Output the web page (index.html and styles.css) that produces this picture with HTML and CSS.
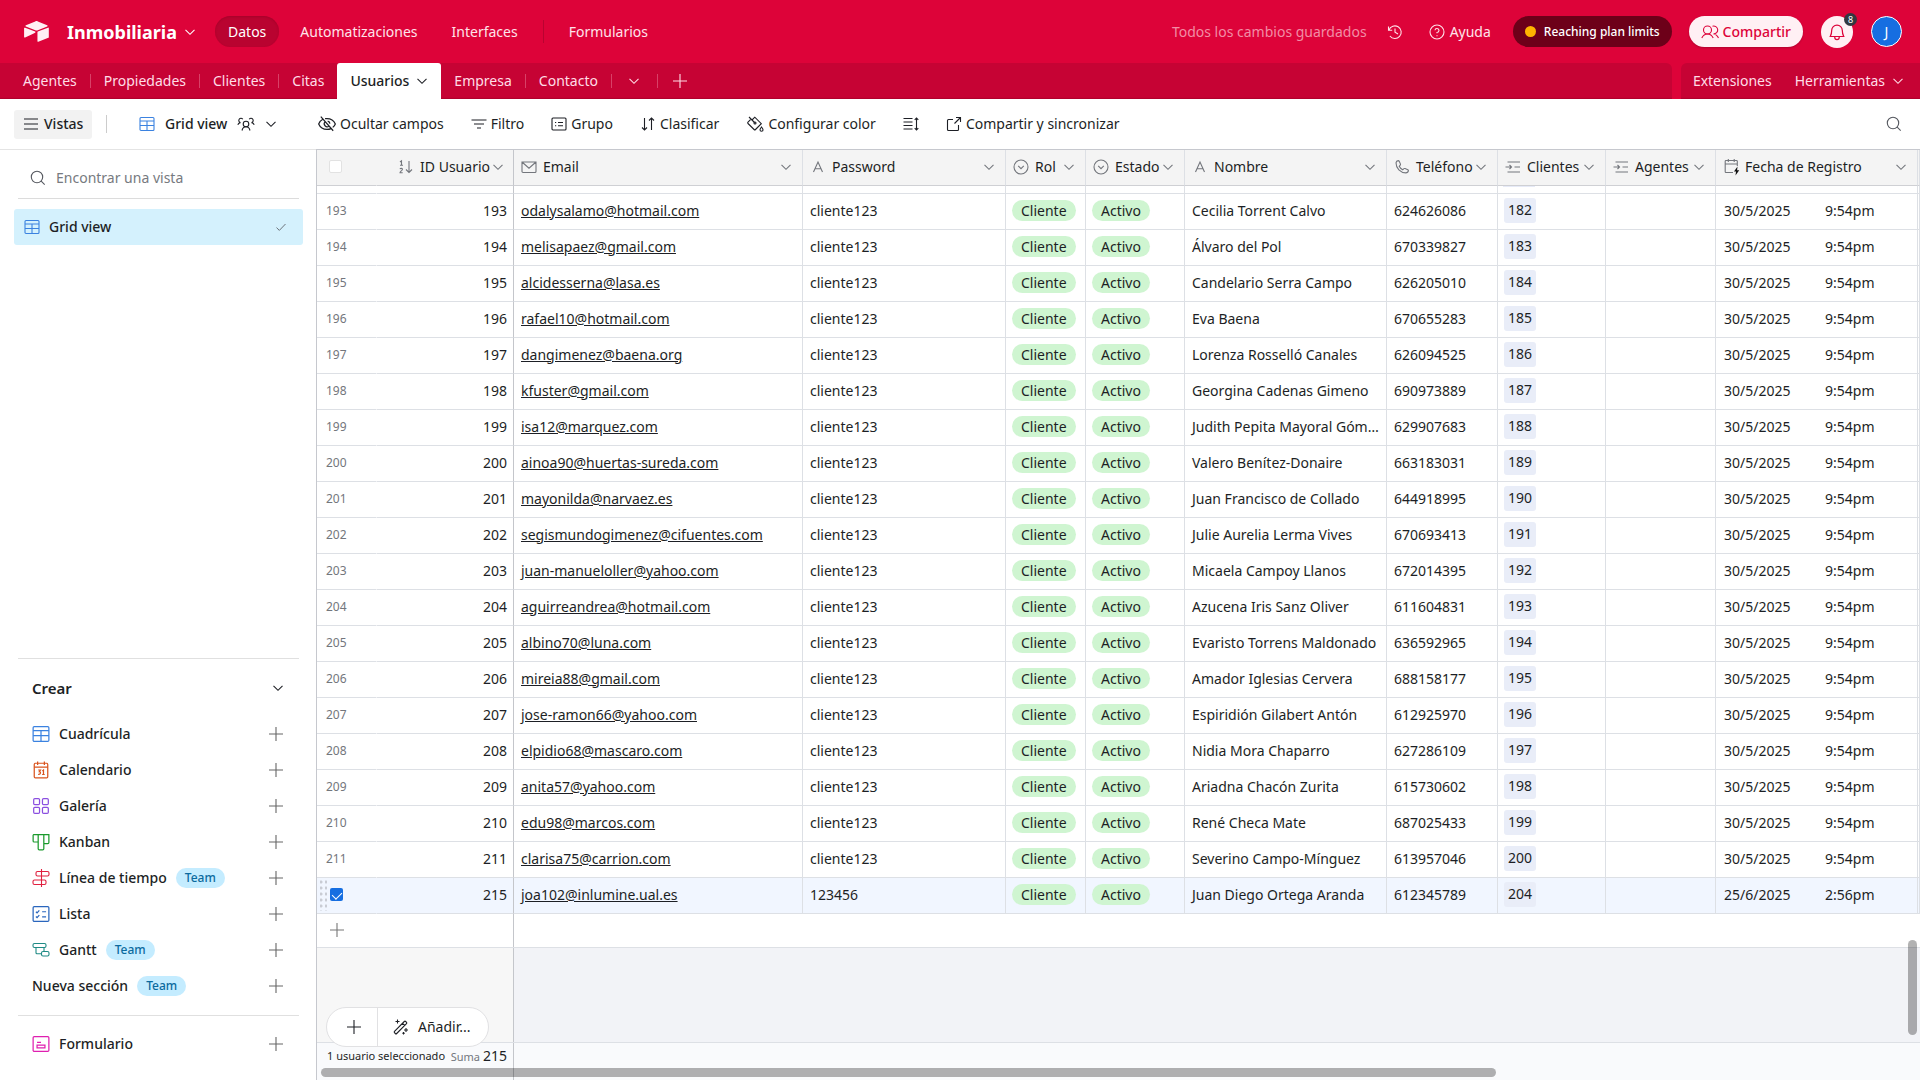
FILE: index.html
```html
<!DOCTYPE html>
<html lang="es">
<head>
<meta charset="utf-8">
<title>Inmobiliaria: Usuarios</title>
<link rel="stylesheet" href="styles.css">
</head>
<body>
<svg class="defs" aria-hidden="true">
  <symbol id="chev" viewBox="0 0 12 12"><path d="M1.5 3.8 6 8.3l4.500-4.500"/></symbol>
  <symbol id="plus" viewBox="0 0 16 16"><path d="M8 1v14M1 8h14"/></symbol>
  <symbol id="grid" viewBox="0 0 16 16"><rect x="1" y="1.500" width="14" height="13" rx="1"/><path d="M1 5h14M1 9.500h14M8 5v9.500"/></symbol>
  <symbol id="search" viewBox="0 0 16 16"><circle cx="7" cy="7" r="5.700"/><path d="m11.200 11.200 3.500 3.500"/></symbol>
  <symbol id="menu" viewBox="0 0 16 16"><path d="M1 3h14M1 8h14M1 13h14"/></symbol>
  <symbol id="team" viewBox="0 0 18 16"><circle cx="9" cy="8" r="2.800"/><path d="M5 14.500c.6-2.400 2-3.700 4-3.700s3.400 1.300 4 3.700M5.800 3.200A2.200 2.200 0 1 0 3.500 6.600C2.200 6.700 1.300 7.500.8 8.800M12.200 3.200a2.200 2.200 0 1 1 2.300 3.400c1.300.1 2.200.9 2.700 2.200"/></symbol>
  <symbol id="hide" viewBox="0 0 16 16"><path d="M2.500 1.500 13.500 14M4.300 3.800C2.500 4.700 1.300 6.200.6 8c1.300 3 4 4.800 7.400 4.800 1.300 0 2.500-.2 3.500-.7M6.300 3.300c.6-.1 1.100-.1 1.700-.1 3.400 0 6.100 1.800 7.400 4.800-.5 1.200-1.300 2.200-2.300 3M6.200 6.100a2.600 2.600 0 0 0 3.500 3.800M8.600 5.400a2.600 2.600 0 0 1 2 2.300"/></symbol>
  <symbol id="filter" viewBox="0 0 16 16"><path d="M.5 4h15M3 8h10M6 12h4"/></symbol>
  <symbol id="group" viewBox="0 0 16 16"><rect x="1" y="2" width="14" height="12" rx="1"/><path d="M7 6.500h5M7 9.800h5M4 6.500h1.200M4 9.800h1.200"/></symbol>
  <symbol id="sort" viewBox="0 0 16 16"><path d="M4.500 2v12M2 11.500l2.500 2.500L7 11.500M11.500 14V2M9 4.500 11.500 2 14 4.500"/></symbol>
  <symbol id="paint" viewBox="0 0 18 17"><path d="M3 1.500 8.500 7M6 4.500l2.800-2.800 6.500 6.500-5.800 5.800a1 1 0 0 1-1.400 0L2 8a1 1 0 0 1 0-1.400l2.500-2.500M15.500 11.500c1 1.300 1.500 2 1.500 2.700a1.500 1.500 0 0 1-3 0c0-.7.500-1.400 1.500-2.700Z"/><circle cx="9" cy="7.500" r="1"/></symbol>
  <symbol id="height" viewBox="0 0 16 16"><path d="M.5 2.500h9M.5 6h9M.5 9.500h9M.5 13h9M13.500 2v12M11.700 3.800l1.800-1.800 1.800 1.800M11.700 12.200l1.800 1.800 1.800-1.800"/></symbol>
  <symbol id="export" viewBox="0 0 16 16"><path d="M7 3.500H2.500a1 1 0 0 0-1 1v9a1 1 0 0 0 1 1h9a1 1 0 0 0 1-1V9M10 1.500h4.500V6M14.500 1.500 8.500 7.500"/></symbol>
  <symbol id="check" viewBox="0 0 16 16"><path d="m2 8.800 3.800 3.700L14 4"/></symbol>
  <symbol id="cal" viewBox="0 0 16 16"><rect x="2" y="2" width="12" height="13" rx="1"/><path d="M2 5.500h12M5 .5v3M11 .5v3M5.500 8h2L6.500 9.500c1.500 0 1.500 2.700-1 2.300M9.200 8.800l1-.8v4M9 12h2.300"/></symbol>
  <symbol id="gallery" viewBox="0 0 16 16"><rect x="1.500" y="1.500" width="5.200" height="5.200" rx="1"/><rect x="9.300" y="1.500" width="5.200" height="5.200" rx="1"/><rect x="1.500" y="9.300" width="5.200" height="5.200" rx="1"/><rect x="9.300" y="9.300" width="5.200" height="5.200" rx="1"/></symbol>
  <symbol id="kanban" viewBox="0 0 16 16"><path d="M1 1.500h14v7a1 1 0 0 1-1 1h-3.500V14a1 1 0 0 1-1 1h-3a1 1 0 0 1-1-1V1.500M1 1.500V7a1 1 0 0 0 1 1h3.500M10.500 1.500v8"/></symbol>
  <symbol id="timeline" viewBox="0 0 18 18"><path d="M9.500 0v18"/><rect x="4" y="2.500" width="13" height="4.500" rx="1.500"/><rect x="1" y="11" width="13" height="4.500" rx="1.500"/></symbol>
  <symbol id="list" viewBox="0 0 16 16"><rect x="1" y="1.500" width="14" height="13" rx="1"/><path d="m3.500 6 1 1 2-2.200M3.500 10.200l1 1 2-2.200M9 6h3.500M9 10.500h3.500"/></symbol>
  <symbol id="gantt" viewBox="0 0 18 16"><rect x="1" y="1.500" width="13" height="4" rx="1.500"/><rect x="9.500" y="9.500" width="7.500" height="4.500" rx="1.500"/><path d="M4 5.500v5.200a1 1 0 0 0 1 1h4.500M12 5.500v4"/></symbol>
  <symbol id="form" viewBox="0 0 16 16"><rect x="1" y="1.500" width="14" height="13" rx="1"/><path d="M4.500 9h7v2.500h-7zM4.500 6.500h3.500"/></symbol>
  <symbol id="num" viewBox="0 0 16 16"><path d="M2 3l1.500-1.200v4.500M2 6.300h3M2 10.200c.4-1.200 2.600-1 2.400.3C4.300 11.500 2 12.500 2 13.700h2.700M11 2v11.500M8 10.500l3 3 3-3"/></symbol>
  <symbol id="mail" viewBox="0 0 16 16"><path d="M1 3h14v9.500a1 1 0 0 1-1 1H2a1 1 0 0 1-1-1ZM1 3l7 6.200L15 3"/></symbol>
  <symbol id="text" viewBox="0 0 16 16"><path d="M3.500 13 8 3l4.500 10M5 9.700h6"/></symbol>
  <symbol id="select" viewBox="0 0 16 16"><circle cx="8" cy="8" r="7"/><path d="M5.200 6.800 8 9.600l2.800-2.800"/></symbol>
  <symbol id="phone" viewBox="0 0 16 16"><path d="M2 3.800C2.200 2.500 3.200 1.700 4.300 1.600c.5 0 .7.200.9.600l1.200 2.700c.2.500.1.900-.2 1.200L5.200 7.300c.7 1.500 1.900 2.700 3.500 3.500l1.200-1.100c.3-.3.800-.3 1.200-.2l2.700 1.200c.4.200.6.500.6.900-.2 1.300-1.200 2.300-2.600 2.300C6.400 13.900 2 9.400 2 3.800Z"/></symbol>
  <symbol id="link" viewBox="0 0 16 16"><path d="M2.500 3H15M9.500 8H15M2.500 13H15M.5 8h6M4.500 6l2 2-2 2"/></symbol>
  <symbol id="caltime" viewBox="0 0 16 18"><path d="M9 14.500H2a.8.8 0 0 1-.8-.8V3.300c0-.4.400-.8.800-.8h10.500c.4 0 .8.400.8.800V8M1.200 6h12M4.300 1v3M10.200 1v3"/><path d="M13.500 8.500 10 13.500h2l-.5 4 3.700-5.200h-2.100z" fill="#111" stroke="none"/></symbol>
  <symbol id="history" viewBox="0 0 16 16"><path d="M1.500 2.500v3.700h3.700M2 6a6.300 6.300 0 1 1 .9 6M8 4.500V8.200l3 1.700"/></symbol>
  <symbol id="help" viewBox="0 0 16 16"><circle cx="8" cy="8" r="7"/><path d="M6 6.300A2 2 0 1 1 8 8.500v.8M8 11.200v1"/></symbol>
  <symbol id="people" viewBox="0 0 18 16"><circle cx="6.500" cy="6" r="4"/><path d="M.8 14C2 11.500 4 10 6.500 10s4.500 1.500 5.700 4M11.500 2.200A4 4 0 1 1 12.500 10c2 .1 3.800 1.500 5 4"/></symbol>
  <symbol id="bell" viewBox="0 0 16 16"><path d="M3.300 6.500a4.700 4.700 0 0 1 9.400 0c0 2.400.6 4.200 1.300 5.500H2c.7-1.300 1.300-3.100 1.300-5.500ZM6 12.200v.5a2 2 0 0 0 4 0v-.5"/></symbol>
  <symbol id="wand" viewBox="0 0 16 16"><path d="M1.500 12.300 11.300 2.500a1 1 0 0 1 1.400 0l.8.800a1 1 0 0 1 0 1.400L3.700 14.500a1 1 0 0 1-1.400 0l-.8-.8a1 1 0 0 1 0-1.400ZM9.500 4.300l2.200 2.200M4.500.5v4M2.500 2.500h4M13 9v4M11 11h4M10.500 13v2.500M9.300 14.300h2.500"/></symbol>
  <symbol id="logo" viewBox="0 0 26 22"><path d="M11.700.4 1.900 4.500c-.6.200-.6 1 0 1.200l9.900 3.900c.8.300 1.800.3 2.600 0l9.800-3.900c.6-.2.600-1 0-1.200L14.400.4c-.9-.4-1.800-.4-2.700 0ZM14 11.800v9.300c0 .5.400.8.900.6l10.500-4.100c.3-.1.500-.4.500-.7V7.600c0-.5-.5-.8-.9-.6l-10.600 4.100c-.3.100-.4.400-.4.700ZM11.600 12.200 8.400 13.800 1.100 17.300c-.5.200-1.100-.1-1.100-.6V7.700c0-.2.100-.4.200-.5.200-.2.600-.3.900-.1L11.600 11c.5.200.5.900 0 1.200Z"/></symbol>
</svg>

<div class="app">
<header class="topbar">
  <a class="brand" href="#"><svg class="logo"><use href="#logo"/></svg><span>Inmobiliaria</span><svg class="i12"><use href="#chev"/></svg></a>
  <nav class="mainnav">
    <a class="current" href="#">Datos</a><a href="#">Automatizaciones</a><a href="#">Interfaces</a><i class="navsep"></i><a href="#">Formularios</a>
  </nav>
  <div class="topright">
    <span class="saved">Todos los cambios guardados</span>
    <button class="plain" aria-label="Historial"><svg class="i16"><use href="#history"/></svg></button>
    <button class="plain help"><svg class="i16"><use href="#help"/></svg>Ayuda</button>
    <button class="limits"><i></i>Reaching plan limits</button>
    <button class="share"><svg class="i18"><use href="#people"/></svg>Compartir</button>
    <button class="bell" aria-label="Notificaciones"><svg class="i18"><use href="#bell"/></svg><span>8</span></button>
    <button class="avatar">J</button>
  </div>
</header>

<div class="tabs">
  <nav class="tablist">
    <a href="#">Agentes</a><a class="sep" href="#">Propiedades</a><a class="sep" href="#">Clientes</a><a class="sep" href="#">Citas</a><a class="active" href="#">Usuarios<svg class="i12"><use href="#chev"/></svg></a><a href="#">Empresa</a><a class="sep" href="#">Contacto</a>
    <button class="sep more" aria-label="Más tablas"><svg class="i12"><use href="#chev"/></svg></button>
    <button class="sep add" aria-label="Añadir tabla"><svg class="i16"><use href="#plus"/></svg></button>
  </nav>
  <nav class="tabtools"><a href="#">Extensiones</a><a href="#">Herramientas<svg class="i12"><use href="#chev"/></svg></a></nav>
</div>

<div class="toolbar">
  <button class="views"><svg class="i16"><use href="#menu"/></svg>Vistas</button>
  <i class="toolsep"></i>
  <button class="viewname"><svg class="i16 blue"><use href="#grid"/></svg>Grid view<svg class="i18"><use href="#team"/></svg><svg class="i12"><use href="#chev"/></svg></button>
  <div class="actions">
    <button><svg class="i18"><use href="#hide"/></svg>Ocultar campos</button>
    <button><svg class="i16"><use href="#filter"/></svg>Filtro</button>
    <button><svg class="i16"><use href="#group"/></svg>Grupo</button>
    <button><svg class="i16"><use href="#sort"/></svg>Clasificar</button>
    <button><svg class="i18"><use href="#paint"/></svg>Configurar color</button>
    <button aria-label="Altura de fila"><svg class="i16"><use href="#height"/></svg></button>
    <button><svg class="i16"><use href="#export"/></svg>Compartir y sincronizar</button>
  </div>
  <button class="find" aria-label="Buscar"><svg class="i16"><use href="#search"/></svg></button>
</div>

<div class="body">
<aside class="sidebar">
  <label class="viewsearch"><svg class="i16"><use href="#search"/></svg><input type="text" aria-label="Encontrar una vista" placeholder="Encontrar una vista"></label>
  <a class="viewitem" href="#"><svg class="i16 blue"><use href="#grid"/></svg>Grid view<svg class="i12 tick"><use href="#check"/></svg></a>
  <section class="create">
    <h2>Crear<svg class="i12"><use href="#chev"/></svg></h2>
    <button><svg class="i18 blue"><use href="#grid"/></svg>Cuadrícula<svg class="i16 p"><use href="#plus"/></svg></button>
    <button><svg class="i18 orange"><use href="#cal"/></svg>Calendario<svg class="i16 p"><use href="#plus"/></svg></button>
    <button><svg class="i18 purple"><use href="#gallery"/></svg>Galería<svg class="i16 p"><use href="#plus"/></svg></button>
    <button><svg class="i18 green"><use href="#kanban"/></svg>Kanban<svg class="i16 p"><use href="#plus"/></svg></button>
    <button><svg class="i18 red"><use href="#timeline"/></svg>Línea de tiempo<span class="team">Team</span><svg class="i16 p"><use href="#plus"/></svg></button>
    <button><svg class="i18 navy"><use href="#list"/></svg>Lista<svg class="i16 p"><use href="#plus"/></svg></button>
    <button><svg class="i18 teal"><use href="#gantt"/></svg>Gantt<span class="team">Team</span><svg class="i16 p"><use href="#plus"/></svg></button>
    <button>Nueva sección<span class="team">Team</span><svg class="i16 p"><use href="#plus"/></svg></button>
    <hr>
    <button><svg class="i18 pink"><use href="#form"/></svg>Formulario<svg class="i16 p"><use href="#plus"/></svg></button>
  </section>
</aside>

<main class="gridarea">
  <table>
    <colgroup><col class="c-idx"><col class="c-id"><col class="c-email"><col class="c-pass"><col class="c-rol"><col class="c-estado"><col class="c-nombre"><col class="c-tel"><col class="c-cli"><col class="c-age"><col class="c-fecha"><col></colgroup>
    <thead><tr>
      <th class="idx"><input type="checkbox" aria-label="Seleccionar todo"></th>
      <th class="id"><div><svg class="i16"><use href="#num"/></svg><span>ID Usuario</span><svg class="i12"><use href="#chev"/></svg></div></th>
      <th><div><svg class="i16"><use href="#mail"/></svg><span>Email</span><svg class="i12"><use href="#chev"/></svg></div></th>
      <th><div><svg class="i16"><use href="#text"/></svg><span>Password</span><svg class="i12"><use href="#chev"/></svg></div></th>
      <th><div><svg class="i16"><use href="#select"/></svg><span>Rol</span><svg class="i12"><use href="#chev"/></svg></div></th>
      <th><div><svg class="i16"><use href="#select"/></svg><span>Estado</span><svg class="i12"><use href="#chev"/></svg></div></th>
      <th><div><svg class="i16"><use href="#text"/></svg><span>Nombre</span><svg class="i12"><use href="#chev"/></svg></div></th>
      <th><div><svg class="i16"><use href="#phone"/></svg><span>Teléfono</span><svg class="i12"><use href="#chev"/></svg></div></th>
      <th><div><svg class="i16"><use href="#link"/></svg><span>Clientes</span><svg class="i12"><use href="#chev"/></svg></div></th>
      <th><div><svg class="i16"><use href="#link"/></svg><span>Agentes</span><svg class="i12"><use href="#chev"/></svg></div></th>
      <th><div class="snug"><svg class="i18"><use href="#caltime"/></svg><span>Fecha de Registro</span><svg class="i12"><use href="#chev"/></svg></div></th>
      <th></th>
    </tr></thead>
    <tbody id="rows"></tbody>
  </table>
  <div class="addrow"><button aria-label="Añadir registro"><svg class="i16"><use href="#plus"/></svg></button><div></div></div>
  <div class="blank"><div></div><div></div></div>
  <div class="summary"><div class="sumleft"><span class="count">1 usuario seleccionado</span><span class="sum"><small>Suma</small>215</span></div><div></div></div>
  <div class="floater"><button aria-label="Añadir"><svg class="i16"><use href="#plus"/></svg></button><button><svg class="i16"><use href="#wand"/></svg>Añadir...</button></div>
  <div class="hscroll"></div>
  <div class="vscroll"></div>
</main>
</div>
</div>
<script src="rows.js"></script>
</body>
</html>
```

FILE: rows.js
```js
const records = [
  [193, 'odalysalamo@hotmail.com', 'Cecilia Torrent Calvo', '624626086', 182],
  [194, 'melisapaez@gmail.com', 'Álvaro del Pol', '670339827', 183],
  [195, 'alcidesserna@lasa.es', 'Candelario Serra Campo', '626205010', 184],
  [196, 'rafael10@hotmail.com', 'Eva Baena', '670655283', 185],
  [197, 'dangimenez@baena.org', 'Lorenza Rosselló Canales', '626094525', 186],
  [198, 'kfuster@gmail.com', 'Georgina Cadenas Gimeno', '690973889', 187],
  [199, 'isa12@marquez.com', 'Judith Pepita Mayoral Gómez', '629907683', 188],
  [200, 'ainoa90@huertas-sureda.com', 'Valero Benítez-Donaire', '663183031', 189],
  [201, 'mayonilda@narvaez.es', 'Juan Francisco de Collado', '644918995', 190],
  [202, 'segismundogimenez@cifuentes.com', 'Julie Aurelia Lerma Vives', '670693413', 191],
  [203, 'juan-manueloller@yahoo.com', 'Micaela Campoy Llanos', '672014395', 192],
  [204, 'aguirreandrea@hotmail.com', 'Azucena Iris Sanz Oliver', '611604831', 193],
  [205, 'albino70@luna.com', 'Evaristo Torrens Maldonado', '636592965', 194],
  [206, 'mireia88@gmail.com', 'Amador Iglesias Cervera', '688158177', 195],
  [207, 'jose-ramon66@yahoo.com', 'Espiridión Gilabert Antón', '612925970', 196],
  [208, 'elpidio68@mascaro.com', 'Nidia Mora Chaparro', '627286109', 197],
  [209, 'anita57@yahoo.com', 'Ariadna Chacón Zurita', '615730602', 198],
  [210, 'edu98@marcos.com', 'René Checa Mate', '687025433', 199],
  [211, 'clarisa75@carrion.com', 'Severino Campo-Mínguez', '613957046', 200],
  [215, 'joa102@inlumine.ual.es', 'Juan Diego Ortega Aranda', '612345789', 204, true]
];

const peek = '<tr class="peek">' + '<td></td>'.repeat(8) + '<td><i></i></td><td></td><td></td><td></td></tr>';

const rowHtml = ([id, email, name, phone, client, selected]) => `
<tr${selected ? ' class="selected"' : ''}>
<td class="idx">${selected ? '<div class="grip"></div><input type="checkbox" checked aria-label="Seleccionar 215">' : id}</td>
<td class="id">${id}</td>
<td><a href="mailto:${email}">${email}</a></td>
<td>${selected ? '123456' : 'cliente123'}</td>
<td class="tight"><span class="pill">Cliente</span></td>
<td class="tight"><span class="pill">Activo</span></td>
<td class="name">${name}</td>
<td>${phone}</td>
<td class="tight"><span class="chip">${client}</span></td>
<td></td>
<td class="when"><span>${selected ? '25/6/2025' : '30/5/2025'}</span><span>${selected ? '2:56pm' : '9:54pm'}</span></td>
<td></td>
</tr>`;

document.getElementById('rows').innerHTML = peek + records.map(rowHtml).join('');
```

FILE: styles.css
```css
* { box-sizing: border-box; }
body { margin: 0; font: 14px/20px "Noto Sans", "Open Sans", sans-serif; color: #1d1f25; background: #fff; }
button, input { font: inherit; color: inherit; }
button { border: 0; padding: 0; background: none; display: flex; align-items: center; white-space: nowrap; }
a { color: inherit; text-decoration: none; }
.defs { position: absolute; width: 0; height: 0; }
svg { fill: none; stroke: currentColor; stroke-width: 1.1; flex: none; }
.i12 { width: 12px; height: 12px; }
.i16 { width: 16px; height: 16px; }
.i18 { width: 18px; height: 18px; }
.app { display: flex; flex-direction: column; height: 100vh; overflow: hidden; }

.topbar { display: flex; align-items: center; height: 63px; flex: none; padding: 0 18px 0 24px; background: #dd0339; color: #ffe3ea; }
.brand { display: flex; align-items: center; font-size: 18px; font-weight: 700; color: #fff; }
.logo { width: 25px; height: 21px; fill: #fff0f4; stroke: none; margin-right: 18px; }
.brand .i12 { margin: 0 19px 0 7px; }
.mainnav { display: flex; align-items: center; gap: 8px; }
.mainnav a { padding: 0 13px; line-height: 31px; border-radius: 16px; }
.mainnav .current { background: #b90330; color: #fff; box-shadow: inset 0 1px 2px #8c002466; }
.navsep { width: 1px; height: 23px; background: #b90330; margin: 0 4px; }
.topright { display: flex; align-items: center; margin-left: auto; }
.saved { color: #f28da5; margin-right: 20px; }
.plain { margin-right: 26px; }
.plain.help { gap: 5px; margin-right: 22px; }
.limits { height: 31px; padding: 0 12px; border-radius: 16px; background: #6d0019; color: #fff; font-size: 12px; font-weight: 500; gap: 8px; margin-right: 17px; }
.limits i { width: 11px; height: 11px; border-radius: 50%; background: #ffb400; }
.share { height: 31px; padding: 0 12px; border-radius: 16px; background: #fff0f4; color: #dd0339; font-weight: 500; gap: 4px; margin-right: 18px; box-shadow: 0 1px 2px #0003; }
.bell { position: relative; width: 32px; height: 32px; border-radius: 50%; background: #fff0f4; color: #dd0339; justify-content: center; margin-right: 18px; }
.bell span { position: absolute; right: -4px; top: -3px; width: 13px; height: 13px; border-radius: 50%; background: #333840; color: #fff; font-size: 9px; line-height: 13px; text-align: center; }
.avatar { width: 31px; height: 31px; border-radius: 50%; border: 1px solid #fff; background: #166ee1; color: #fff; justify-content: center; }

.tabs { display: flex; gap: 9px; height: 36px; flex: none; background: #dd0339; color: #ffdde6; }
.tablist, .tabtools { display: flex; align-items: stretch; background: #c60334; box-shadow: inset 0 -2px 1px -1px #8c002466; }
.tablist { flex: 1; border-top-right-radius: 6px; padding-left: 10px; }
.tablist a, .tabtools a { display: flex; align-items: center; padding: 0 13px; }
.tablist .sep { border-left: 1px solid; border-image: linear-gradient(transparent 11px, #d84167 11px 25px, transparent 25px) 1; }
.tablist .active { background: #fff; color: #1d1f25; font-weight: 500; border-radius: 3px 3px 0 0; gap: 7px; }
.tablist button { width: 46px; justify-content: center; }
.tabtools { border-top-left-radius: 6px; padding-right: 5px; }
.tabtools a { padding: 0 11px 0 12px; gap: 7px; }

.toolbar { display: flex; align-items: center; height: 50px; flex: none; padding: 0 18px 0 14px; }
.views { height: 29px; width: 78px; gap: 5px; padding-left: 9px; border-radius: 3px; background: #f2f2f2; font-weight: 500; }
.toolsep { width: 1px; height: 18px; background: #ccc; margin: 0 32px 0 14px; }
.viewname { width: 179px; gap: 10px; font-weight: 500; }
.actions { display: flex; gap: 27px; }
.actions button { gap: 4px; }
.find { margin-left: auto; color: #55585f; }

.body { display: flex; flex: 1; min-height: 0; }
.sidebar { width: 316px; flex: none; display: flex; flex-direction: column; padding: 0 13px 18px 14px; border-top: 1px solid #e4e4e4; }
.viewsearch { display: flex; align-items: center; gap: 10px; height: 49px; margin: 0 4px; padding: 8px 12px 0; border-bottom: 1px solid #dcdcdc; color: #55585f; }
.viewsearch input { border: 0; outline: 0; padding: 0; flex: 1; min-width: 0; background: none; }
.viewsearch input::placeholder { color: #777a80; opacity: 1; }
.viewitem { display: flex; align-items: center; height: 36px; margin-top: 10px; padding: 0 16px 0 10px; gap: 9px; border-radius: 3px; background: #d4f1fd; font-weight: 500; }
.tick { margin-left: auto; color: #55585f; }
.create { margin: auto 4px 0; border-top: 1px solid #e0e0e0; }
.create hr { border: 0; border-top: 1px solid #e0e0e0; margin: 11px 0 10px; }
.create h2 { display: flex; align-items: center; justify-content: space-between; margin: 0; padding: 0 15px 0 14px; height: 57px; font-size: 15px; font-weight: 600; }
.create button { width: 100%; height: 36px; padding: 0 15px 0 14px; gap: 9px; font-weight: 500; }
.p { margin-left: auto; color: #666; }
.team { height: 20px; padding: 0 9px; border-radius: 10px; background: #c4ecff; color: #0b6a9e; font-size: 12px; }
.blue { color: #3b82e0; } .orange { color: #d9541e; } .purple { color: #8b4fe0; } .green { color: #1a9a2c; }
.red { color: #e0203f; } .navy { color: #2a66bd; } .teal { color: #1f8a85; } .pink { color: #df1fb0; }

.gridarea { position: relative; flex: 1; min-width: 0; display: flex; flex-direction: column; overflow: hidden; border-left: 1px solid #c6c8ce; border-top: 1px solid #c6c8ce; }
table { table-layout: fixed; width: 100%; border-collapse: separate; border-spacing: 0; flex: none; }
.c-idx { width: 60px; } .c-id { width: 137px; } .c-email { width: 289px; } .c-pass { width: 203px; } .c-rol { width: 80px; }
.c-estado { width: 99px; } .c-nombre { width: 202px; } .c-tel { width: 111px; } .c-cli { width: 108px; } .c-age { width: 110px; } .c-fecha { width: 202px; }
th, td { height: 36px; padding: 0 10px 2px 7px; border-right: 1px solid #dde0e5; border-bottom: 1px solid #dde0e5; text-align: left; white-space: nowrap; overflow: hidden; text-overflow: ellipsis; }
th { font-weight: 400; background: #f4f4f4; border-bottom-color: #cfd0d4; }
th div { display: flex; align-items: center; gap: 6px; }
th .snug { gap: 4px; }
th svg { color: #73767c; }
th .i12 { margin-left: auto; }
th span { margin-right: -4px; }
td.name { padding-right: 4px; }
.idx { border-right-color: transparent; padding-left: 9px; color: #73767c; font-size: 12px; position: relative; }
th.idx { padding-left: 12px; border-right-color: #f4f4f4; }
.id { border-right-color: #c4c6cb; text-align: right; padding-right: 6px; }
th.id { padding-right: 9px; }
.id div { justify-content: flex-end; }
th.id .i12 { margin-left: 0; }
td a { text-decoration: underline; }
.peek td { height: 8px; line-height: 0; padding: 0 0 0 5px; vertical-align: top; }
.peek td:first-child { border-right-color: transparent; }
.peek td:nth-child(2) { border-right-color: #c4c6cb; }
.peek i { display: block; width: 32px; height: 1px; background: #e6eaf7; }
td.tight { padding-left: 6px; padding-right: 0; }
.pill { display: inline-block; vertical-align: middle; padding: 0 9px; line-height: 21px; border-radius: 11px; background: #cff5d1; }
.chip { display: inline-block; vertical-align: middle; padding: 0 4px 2px; line-height: 23px; border-radius: 3px; background: #e9edf8; }
.when span { display: inline-block; width: 101px; padding-left: 1px; }
.when span + span { width: auto; }
.selected td { background: #f1f6ff; }
input[type=checkbox] { appearance: none; display: block; width: 13px; height: 13px; margin: 0; border-radius: 2px; background: #fff; border: 1px solid #e2e2e2; }
input[type=checkbox]:checked { border: 0; background: #166ee1; position: relative; margin-left: 4px; }
input[type=checkbox]:checked::after { content: ""; position: absolute; left: 4px; top: 2px; width: 5px; height: 8px; border: solid #fff; border-width: 0 1px 1px 0; transform: rotate(45deg); }
.grip { position: absolute; left: 3px; top: 2px; width: 7px; height: 31px; background: radial-gradient(circle at 1px 2px, #c9ccd4 1px, transparent 2px) 0 0 / 5px 6px; }

.addrow, .blank, .summary { display: grid; grid-template-columns: 197px 1fr; border-bottom: 1px solid #dde0e5; }
.addrow > :first-child, .blank > :first-child, .summary > :first-child { border-right: 1px solid #c4c6cb; }
.addrow { height: 34px; flex: none; }
.addrow button { padding: 0 0 2px 12px; color: #777; }
.blank { flex: 1; background: #f2f3f7; }
.blank > :first-child { background: #f7f7f7; }
.summary { height: 37px; flex: none; background: #f9fafc; border-bottom: 0; }
.sumleft { display: flex; align-items: flex-start; justify-content: space-between; padding: 3px 6px 0 10px; white-space: nowrap; }
.count, .sum small { font-size: 11px; }
.sum small { color: #73767c; margin-right: 3px; }
.floater { position: absolute; left: 9px; bottom: 33px; display: flex; height: 40px; border: 1px solid #e1e1e3; border-radius: 20px; background: #fff; overflow: hidden; }
.floater button { padding: 0 18px 0 15px; gap: 9px; }
.floater button:first-child { width: 51px; padding: 0 0 0 19px; border-right: 1px solid #e1e1e3; }
.hscroll { position: absolute; left: 4px; right: 424px; bottom: 3px; height: 9px; border-radius: 5px; background: #0000004d; }
.vscroll { position: absolute; right: 3px; bottom: 45px; width: 9px; height: 95px; border-radius: 5px; background: #0000004d; }
```
